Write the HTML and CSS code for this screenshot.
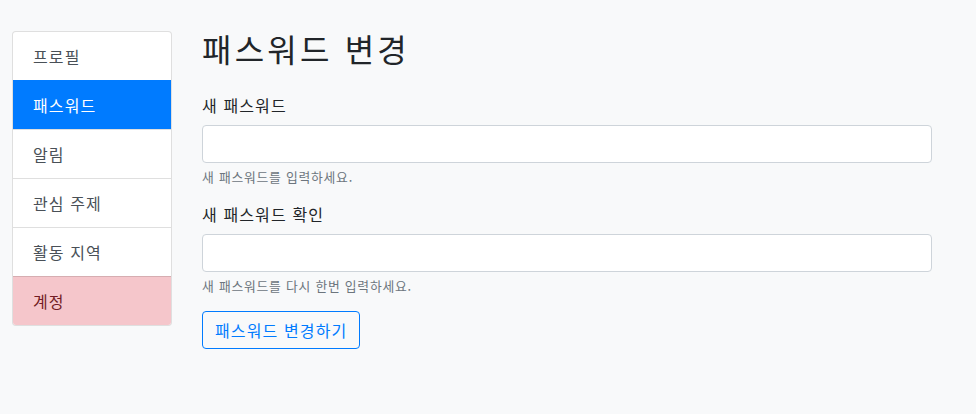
FILE: index.html
```html
<!DOCTYPE html>
<html lang="ko">
<head>
    <meta charset="UTF-8">
    <meta name="viewport" content="width=device-width, initial-scale=1.0">
    <title>패스워드 변경</title>
    <link rel="stylesheet" href="styles.css">
</head>
<body>
    <div class="page">
        <div class="side-menu">
            <a href="#" class="menu-item">프로필</a>
            <a href="#" class="menu-item active">패스워드</a>
            <a href="#" class="menu-item">알림</a>
            <a href="#" class="menu-item">관심 주제</a>
            <a href="#" class="menu-item">활동 지역</a>
            <a href="#" class="menu-item danger">계정</a>
        </div>

        <div class="content">
            <h2 class="title">패스워드 변경</h2>
            <form class="pw-form" onsubmit="return false;">
                <div class="form-group">
                    <label for="pw1">새 패스워드</label>
                    <input type="password" id="pw1" class="form-control">
                    <small class="help">새 패스워드를 입력하세요.</small>
                </div>
                <div class="form-group">
                    <label for="pw2">새 패스워드 확인</label>
                    <input type="password" id="pw2" class="form-control">
                    <small class="help">새 패스워드를 다시 한번 입력하세요.</small>
                </div>
                <button type="submit" class="btn-outline">패스워드 변경하기</button>
            </form>
        </div>
    </div>
</body>
</html>
```

FILE: styles.css
```css
* {
    box-sizing: border-box;
    margin: 0;
    padding: 0;
}

body {
    background-color: #f8f9fa;
    color: #212529;
    font-family: "Noto Sans CJK KR", "Noto Sans", sans-serif;
    font-size: 16px;
    line-height: 24px;
    letter-spacing: 0.07em;
}

.page {
    display: flex;
    align-items: flex-start;
    gap: 30px;
    padding: 31px 44px 0 12px;
}

.side-menu {
    width: 160px;
    flex-shrink: 0;
    display: flex;
    flex-direction: column;
    border: 1px solid rgba(0, 0, 0, 0.125);
    border-radius: 4px;
    overflow: hidden;
    background-color: #fff;
}

.menu-item {
    display: block;
    padding: 12px 20px;
    color: #495057;
    text-decoration: none;
    border-top: 1px solid rgba(0, 0, 0, 0.125);
}

.menu-item:first-child {
    border-top: none;
}

.menu-item.active {
    background-color: #007bff;
    color: #fff;
    border-top-color: #007bff;
}

.menu-item.danger {
    background-color: #f5c6cb;
    color: #721c24;
}

.content {
    flex: 1;
}

.title {
    font-size: 32px;
    font-weight: 400;
    line-height: 38px;
    letter-spacing: 0.1em;
    margin-top: -2px;
    margin-bottom: 26px;
}

.form-group {
    display: flex;
    flex-direction: column;
    margin-bottom: 16px;
}

.form-group label {
    margin-bottom: 8px;
}

.form-control {
    height: 38px;
    padding: 6px 12px;
    font-size: 16px;
    border: 1px solid #ced4da;
    border-radius: 4px;
    background-color: #fff;
}

.help {
    margin-top: 4px;
    font-size: 12.8px;
    line-height: 19px;
    letter-spacing: 0.06em;
    color: #6c757d;
}

.btn-outline {
    height: 38px;
    padding: 6px 12px;
    font-family: inherit;
    font-size: 16px;
    line-height: 24px;
    letter-spacing: 0.07em;
    color: #007bff;
    background-color: transparent;
    border: 1px solid #007bff;
    border-radius: 4px;
    cursor: pointer;
}
```
